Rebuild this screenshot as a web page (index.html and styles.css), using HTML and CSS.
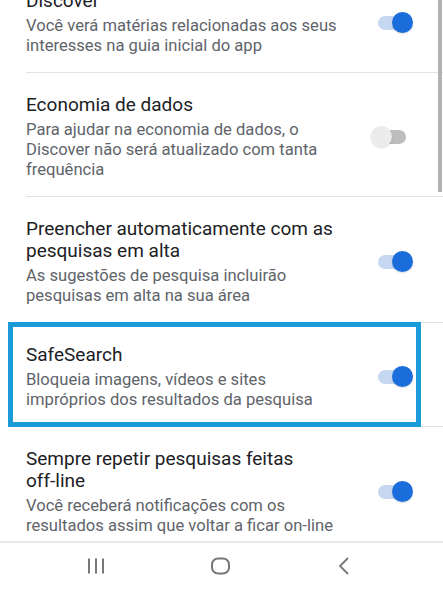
FILE: index.html
```html
<!DOCTYPE html>
<html lang="pt-BR">

<head>
    <meta charset="UTF-8">
    <meta name="viewport" content="width=device-width, initial-scale=1.0">
    <title>Configurações</title>
    <link rel="stylesheet" href="styles.css">
</head>

<body>
    <div class="screen">
        <div class="scroll-area">
            <div class="scrollbar"></div>
            <ul class="settings">
                <li class="setting">
                    <div class="setting-text">
                        <div class="setting-title">Discover</div>
                        <div class="setting-desc">Você verá matérias relacionadas aos seus interesses na guia inicial do app</div>
                    </div>
                    <span class="toggle on"><span class="track"></span><span class="knob"></span></span>
                </li>
                <li class="setting">
                    <div class="setting-text">
                        <div class="setting-title">Economia de dados</div>
                        <div class="setting-desc">Para ajudar na economia de dados, o Discover não será atualizado com tanta frequência</div>
                    </div>
                    <span class="toggle"><span class="track"></span><span class="knob"></span></span>
                </li>
                <li class="setting">
                    <div class="setting-text">
                        <div class="setting-title">Preencher automaticamente com as pesquisas em alta</div>
                        <div class="setting-desc">As sugestões de pesquisa incluirão pesquisas em alta na sua área</div>
                    </div>
                    <span class="toggle on"><span class="track"></span><span class="knob"></span></span>
                </li>
                <li class="setting highlighted">
                    <div class="setting-text">
                        <div class="setting-title">SafeSearch</div>
                        <div class="setting-desc">Bloqueia imagens, vídeos e sites impróprios dos resultados da pesquisa</div>
                    </div>
                    <span class="toggle on"><span class="track"></span><span class="knob"></span></span>
                </li>
                <li class="setting">
                    <div class="setting-text">
                        <div class="setting-title">Sempre repetir pesquisas feitas <span class="nowrap">off-line</span></div>
                        <div class="setting-desc">Você receberá notificações com os resultados assim que voltar a ficar <span class="nowrap">on-line</span></div>
                    </div>
                    <span class="toggle on"><span class="track"></span><span class="knob"></span></span>
                </li>
            </ul>
        </div>

        <nav class="nav-bar">
            <svg class="nav-icon" width="24" height="20" viewBox="0 0 24 20">
                <path d="M5 1.5v15M12 1.5v15M19 1.5v15" stroke="#777" stroke-width="2" fill="none" />
            </svg>
            <svg class="nav-icon" width="24" height="20" viewBox="0 0 24 20">
                <rect x="3" y="1.5" width="17" height="15" rx="6" stroke="#777" stroke-width="2" fill="none" />
            </svg>
            <svg class="nav-icon" width="24" height="20" viewBox="0 0 24 20">
                <path d="M15 1L7 9l8 8" stroke="#777" stroke-width="1.8" fill="none" />
            </svg>
        </nav>
    </div>
</body>

</html>
```

FILE: styles.css
```css
body {
    margin: 0;
    background: #ffffff;
    font-family: Roboto, "Noto Sans", sans-serif;
}

.screen {
    display: flex;
    flex-direction: column;
    width: 443px;
    height: 591px;
    overflow: hidden;
}

.scroll-area {
    position: relative;
    flex: 1;
    overflow: hidden;
}

.scrollbar {
    position: absolute;
    top: 0;
    right: 1px;
    width: 4px;
    height: 192px;
    background: #b3b3b3;
    z-index: 2;
}

.settings {
    list-style: none;
    margin: -31px 0 0 0;
    padding: 0;
}

.setting {
    position: relative;
    display: flex;
    align-items: center;
    justify-content: space-between;
    margin-left: 26px;
    padding: 21px 30px 16px 0;
    border-bottom: 1px solid #e2e2e2;
}

.setting-text {
    width: 318px;
}

.setting-title {
    font-size: 19px;
    line-height: 22px;
    color: #202124;
}

.setting-desc {
    margin-top: 4px;
    font-size: 16.6px;
    line-height: 20px;
    color: #60646a;
}

.nowrap {
    white-space: nowrap;
}

.highlighted::after {
    content: "";
    position: absolute;
    top: -1px;
    bottom: -1px;
    left: -18px;
    right: 22px;
    border: 5px solid #1b9bd7;
}

.toggle {
    position: relative;
    display: block;
    width: 42px;
    height: 22px;
    flex-shrink: 0;
}

.toggle .track {
    position: absolute;
    top: 4px;
    left: 7px;
    width: 28px;
    height: 14px;
    border-radius: 7px;
    background: #bdbdbd;
}

.toggle .knob {
    position: absolute;
    top: 0;
    left: 0;
    width: 21px;
    height: 21px;
    border-radius: 50%;
    background: #ececec;
    box-shadow: 0 1px 2px rgba(0, 0, 0, 0.15);
}

.toggle.on .track {
    background: #c6d8f1;
}

.toggle.on .knob {
    left: 21px;
    background: #1c6ddc;
}

.nav-bar {
    display: flex;
    justify-content: space-between;
    align-items: center;
    height: 48px;
    padding: 0 86px 0 84px;
    border-top: 2px solid #e8e8e8;
    background: #ffffff;
}
```
